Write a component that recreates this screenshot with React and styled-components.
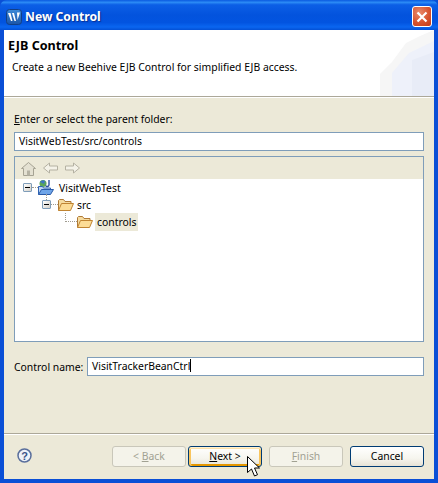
import React from "react";
import styled, { createGlobalStyle } from "styled-components";

const Global = createGlobalStyle`
  html, body { margin: 0; padding: 0; background: #0a50d8; }
  #root { width: 438px; height: 483px; }
`;

const Win = styled.div`
  width: 438px; height: 483px; box-sizing: border-box; display: flex; flex-direction: column;
  background: #0a4fd6; font-family: "Noto Sans", sans-serif; font-size: 10.4px; color: #000; overflow: hidden; position: relative;
`;
const TitleBar = styled.div`
  height: 30px; flex: none; display: flex; align-items: center; padding: 3px 5px 0 6px; gap: 3px; box-sizing: border-box;
  border-radius: 7px 7px 0 0;
  background: linear-gradient(180deg, #0a5ae0 0%, #2b8af5 8%, #0c5fe6 16%, #0353dd 50%, #0254e0 75%, #0a66f0 90%, #0350d6 100%);
`;
const TitleText = styled.span`
  flex: 1; color: #fff; font: bold 12.2px "Noto Sans", sans-serif; text-shadow: 1px 1px 1px #0a2f90;
`;
const CloseBtn = styled.div`
  width: 20px; height: 21px; box-sizing: border-box; border: 1px solid #fff; border-radius: 3px; margin-right: 1px;
  background: radial-gradient(circle at 35% 30%, #e88a6c 0%, #d8542f 55%, #c03a18 100%); display: flex; align-items: center; justify-content: center;
`;
const Body = styled.div`
  flex: 1; margin: 0 4px 4px; background: #ece9d8; display: flex; flex-direction: column; min-height: 0;
`;
const Header = styled.div`
  flex: none; box-sizing: border-box; background: #fff; padding: 9px 8px 0 4px; position: relative; overflow: hidden;
  border-bottom: 1px solid #aca899; box-shadow: 0 1px 0 #fff; height: 67px;
`;
const HeaderTitle = styled.div`
  font: bold 12.6px "Noto Sans", sans-serif; line-height: 14px;
`;
const HeaderText = styled.div`
  margin: 7px 0 0 4px; line-height: 14px; white-space: nowrap;
`;
const Watermark = styled.svg`
  position: absolute; right: 0; top: 0;
`;
const Content = styled.div`
  flex: 1; display: flex; flex-direction: column; padding: 15px 10px 0; min-height: 0;
`;
const Label = styled.div`
  line-height: 14px; white-space: nowrap;
  u { text-decoration-thickness: 1px; }
`;
const Field = styled.div`
  height: 19px; box-sizing: border-box; border: 1px solid #7f9db9; background: #fff; padding: 0 4px; line-height: 17px; white-space: nowrap;
  flex: ${p => (p.$grow ? 1 : "none")}; margin-top: ${p => p.$top || 0}px; position: relative;
`;
const Caret = styled.span`
  display: inline-block; width: 1px; height: 13px; background: #000; vertical-align: -2px;
`;
const TreeBox = styled.div`
  margin-top: 5px; height: 186px; flex: none; box-sizing: border-box; border: 1px solid #7f9db9; background: #fff; display: flex; flex-direction: column;
`;
const ToolBar = styled.div`
  height: 22px; flex: none; background: #ece9d8; display: flex; align-items: center; gap: 7px; padding-left: 6px;
`;
const Tree = styled.div`
  padding: 0 0 0 8px; display: flex; flex-direction: column;
`;
const TreeRow = styled.div`
  height: 17px; display: flex; align-items: center; margin-left: ${p => p.$indent * 19}px;
`;
const Expander = styled.span`
  width: 9px; height: 9px; box-sizing: border-box; border: 1px solid #7f9db9; border-radius: 1px; background: linear-gradient(135deg, #fff, #d4d0c8); display: flex; align-items: center; justify-content: center; flex: none; position: relative;
  &::after { content: ""; width: 5px; height: 1px; background: #000; }
  ${p => p.$stem && `&::before { content: ""; position: absolute; left: 3px; top: -7px; height: 6px; border-left: 1px dotted #a09c90; }`}
`;
const Dots = styled.span`
  width: ${p => p.$w}px; flex: none; border-top: 1px dotted #a09c90;
`;
const Elbow = styled.span`
  width: 12px; height: 9px; flex: none; margin: -9px 0 0 4px; border-left: 1px dotted #a09c90; border-bottom: 1px dotted #a09c90; box-sizing: border-box;
`;
const NodeText = styled.span`
  margin-left: ${p => p.$ml ?? 3}px; padding: 1px 2px 0; line-height: 17px; background: ${p => (p.$sel ? "#ece9d8" : "transparent")};
`;
const FieldRow = styled.div`
  display: flex; align-items: center; margin-top: 15px;
`;
const FieldLabel = styled.span`
  width: 73px; flex: none; white-space: nowrap;
`;
const Spacer = styled.div`flex: 1;`;
const Footer = styled.div`
  height: 46px; flex: none; box-sizing: border-box; border-top: 1px solid #aca899; box-shadow: inset 0 1px 0 #fff; display: flex; align-items: flex-start; padding: 12px 10px 0 13px;
`;
const HelpIcon = styled.svg`
  flex: none; margin-top: 2px;
`;
const Buttons = styled.div`
  flex: 1; display: flex; justify-content: flex-end; align-items: center;
`;
const Btn = styled.div`
  width: 74px; height: 21px; box-sizing: border-box; margin-left: ${p => p.$ml || 0}px; border-radius: 3px; text-align: center; line-height: 19px; white-space: pre;
  border: 1px solid ${p => (p.$disabled ? "#c9c7ba" : "#003c74")}; color: ${p => (p.$disabled ? "#a1a192" : "#000")};
  background: ${p => (p.$disabled ? "#f4f3ea" : "linear-gradient(180deg,#fff 0%,#f6f5ee 60%,#e6e3d6 100%)")};
  box-shadow: ${p => (p.$focus ? "inset 0 1px 0 #fff0cf, inset 0 2px 0 #fde2a8, inset 2px 0 0 #f9c55e, inset -2px 0 0 #f9c55e, inset 0 -2px 0 #e59700" : "none")};
  u { text-decoration-thickness: 1px; }
`;
const Cursor = styled.svg`
  position: absolute; left: 247px; top: 456px;
`;

const Folder = () => (
  <svg width="16" height="12" viewBox="0 0 16 12">
    <path d="M.5 11.5V1.500l1-1h4l1.500 2h6v2" fill="#f6dca0" stroke="#b07a36" />
    <path d="M.5 11.500l3-7h12l-3 7z" fill="#fcdc96" stroke="#c08432" />
  </svg>
);
const Project = () => (
  <svg width="16" height="17" viewBox="0 0 16 17">
    <circle cx="5" cy="4.500" r="3.500" fill="#5ba55a" />
    <path d="M2 3a3.500 3.500 0 0 1 5-1L6 5z" fill="#3d77c4" />
    <path d="M11 1v5c0 2-3 2-3 .5" fill="none" stroke="#2b4fa0" strokeWidth="1.400" />
    <path d="M.5 15.500V7.500h4l1 1.500h7v2" fill="#bfd6f2" stroke="#2f63b5" />
    <path d="M.5 15.500l3-5h12l-3 5z" fill="#6fa5e8" stroke="#2a5aa8" />
  </svg>
);

export default function App() {
  return (
    <Win>
      <Global />
      <TitleBar>
        <svg width="16" height="16" viewBox="0 0 16 16">
          <defs>
            <linearGradient id="logoBg" x1="0" y1="0" x2="0" y2="1">
              <stop offset="0" stopColor="#3d8ad8" />
              <stop offset="1" stopColor="#1b55a8" />
            </linearGradient>
          </defs>
          <rect x=".5" y=".5" width="15" height="15" rx="3" fill="url(#logoBg)" stroke="#123f86" />
          <path d="M2 4h2.500l2 8H5zM6 4h2l2 8H8.500zM11 3.500h3L11.500 11z" fill="#fff" />
        </svg>
        <TitleText>New Control</TitleText>
        <CloseBtn>
          <svg width="12" height="12" viewBox="0 0 12 12"><path d="M1.500 1.500l9 9M10.500 1.500l-9 9" stroke="#fff" strokeWidth="2.200" /></svg>
        </CloseBtn>
      </TitleBar>
      <Body>
        <Header>
          <Watermark width="56" height="66" viewBox="0 0 56 66">
            <path d="M2 66V44l12-12 14-19 14-7 14-6v66z" fill="#f6f6f6" />
            <path d="M14 66V43l17-20 25-12v55z" fill="#eef1fa" />
            <path d="M34 66V30l22-8v44z" fill="#e8ecf7" />
          </Watermark>
          <HeaderTitle>EJB Control</HeaderTitle>
          <HeaderText>Create a new Beehive EJB Control for simplified EJB access.</HeaderText>
        </Header>
        <Content>
          <Label><u>E</u>nter or select the parent folder:</Label>
          <Field $top={6}>VisitWebTest/src/controls</Field>
          <TreeBox>
            <ToolBar>
              <svg width="15" height="15" viewBox="0 0 15 15"><path d="M.5 7.500l7-6 7 6h-2v7h-10v-7z" fill="#e4e1d2" stroke="#a5a293" /><rect x="6" y="9.500" width="3" height="5" fill="#b5b2a3" /></svg>
              <svg width="15" height="12" viewBox="0 0 15 12"><path d="M.5 6l6-5v3h8v4h-8v3z" fill="#f4f2e8" stroke="#b4b1a2" /></svg>
              <svg width="15" height="12" viewBox="0 0 15 12"><path d="M14.500 6l-6-5v3h-8v4h8v3z" fill="#f4f2e8" stroke="#b4b1a2" /></svg>
            </ToolBar>
            <Tree>
              <TreeRow $indent={0}><Expander /><Dots $w={6} /><Project /><NodeText>VisitWebTest</NodeText></TreeRow>
              <TreeRow $indent={1}><Expander $stem /><Dots $w={7} /><Folder /><NodeText $ml={1}>src</NodeText></TreeRow>
              <TreeRow $indent={2}><Elbow /><Folder /><NodeText $ml={2} $sel>controls</NodeText></TreeRow>
            </Tree>
          </TreeBox>
          <FieldRow>
            <FieldLabel>Control name:</FieldLabel>
            <Field $grow>VisitTrackerBeanCtrl<Caret /></Field>
          </FieldRow>
          <Spacer />
        </Content>
        <Footer>
          <HelpIcon width="15" height="15" viewBox="0 0 15 15">
            <circle cx="7.500" cy="7.500" r="6.500" fill="#eef2f8" stroke="#5a6f9c" strokeWidth="1.500" />
            <text x="7.500" y="11.500" textAnchor="middle" fontFamily="Liberation Sans" fontWeight="bold" fontSize="11" fill="#3a5488">?</text>
          </HelpIcon>
          <Buttons>
            <Btn $disabled>&lt; <u>B</u>ack</Btn>
            <Btn $focus $ml={2}><u>N</u>ext &gt;</Btn>
            <Btn $disabled $ml={7}><u>F</u>inish</Btn>
            <Btn $ml={7}>Cancel</Btn>
          </Buttons>
        </Footer>
      </Body>
      <Cursor width="14" height="22" viewBox="0 0 14 22">
        <path d="M.5.500v16l4-3.500 3 7 3-1.300-3-6.700h5z" fill="#fff" stroke="#000" />
      </Cursor>
    </Win>
  );
}
